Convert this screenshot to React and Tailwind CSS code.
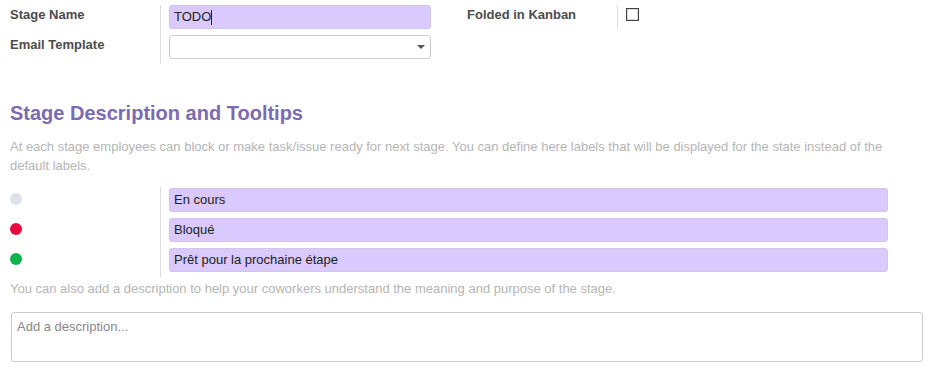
export default function App() {
  const font = { fontFamily: '"Liberation Sans", Arial, sans-serif' };
  return (
    <div className="w-[930px] h-[369px] bg-white overflow-hidden text-[13px] text-[#4c4c4c]" style={font}>
      {/* top groups */}
      <div className="flex pl-[10px] pt-[5px]">
        <div className="flex w-[457px]">
          <div className="w-[150px] flex flex-col gap-[10px] font-bold text-[#4c4c4c]">
            <div className="h-[20px] leading-[20px]">Stage Name</div>
            <div className="h-[20px] leading-[20px]">Email Template</div>
          </div>
          <div className="border-l border-[#dcdcdc] pl-[8px] pb-[5px] flex flex-col gap-[6px]">
            <div className="w-[262px] h-[24px] rounded-[3px] bg-[#d9c9fd] border border-[#cfc6e8] flex items-center px-[4px] text-[#222]">
              TODO<span className="inline-block w-px h-[15px] bg-[#222]" />
            </div>
            <div className="w-[262px] h-[24px] rounded-[3px] bg-white border border-[#cccccc] flex items-center justify-end pr-[5px]">
              <span className="w-0 h-0 border-l-[4px] border-r-[4px] border-t-[4px] border-l-transparent border-r-transparent border-t-[#555]" />
            </div>
          </div>
        </div>
        <div className="flex">
          <div className="w-[150px] font-bold h-[20px] leading-[20px]">Folded in Kanban</div>
          <div className="border-l border-[#dcdcdc] pl-[8px] h-[24px] pt-[3px]">
            <div className="w-[13px] h-[13px] border-[1.5px] border-[#444] bg-white shadow-[inset_0_0_0_1px_#d8d8e0]" />
          </div>
        </div>
      </div>

      {/* section title */}
      <div className="pl-[10px] pt-[37px] text-[20px] leading-[24px] font-bold text-[#7c6bb0]">
        Stage Description and Tooltips
      </div>
      <div className="pl-[10px] pr-[20px] pt-[12px] text-[13px] leading-[19px] text-[#b5b5b5]">
        At each stage employees can block or make task/issue ready for next stage. You can define here labels that will be displayed for the state instead of the default labels.
      </div>

      {/* states */}
      <div className="flex pl-[10px] pt-[12px]">
        <div className="w-[150px] flex flex-col gap-[18px] pt-[6px]">
          <span className="w-[12px] h-[12px] rounded-full bg-[#dee2e6]" />
          <span className="w-[12px] h-[12px] rounded-full bg-[#ea0842]" />
          <span className="w-[12px] h-[12px] rounded-full bg-[#0cb34a]" />
        </div>
        <div className="border-l border-[#dcdcdc] pl-[8px] pt-[1px] pb-[5px] flex flex-col gap-[6px]">
          {["En cours", "Bloqué", "Prêt pour la prochaine étape"].map((t) => (
            <div key={t} className="w-[719px] h-[24px] rounded-[3px] bg-[#d9c9fd] border border-[#cfc6e8] flex items-center px-[4px] text-[#222]">
              {t}
            </div>
          ))}
        </div>
      </div>
      <div className="pl-[10px] pt-[2px] text-[13px] leading-[19px] text-[#b5b5b5]">
        You can also add a description to help your coworkers understand the meaning and purpose of the stage.
      </div>
      <div className="pl-[11px] pt-[14px]">
        <div className="w-[912px] h-[50px] rounded-[3px] border border-[#cccccc] px-[5px] pt-[4px] text-[13px] text-[#888]">
          Add a description...
        </div>
      </div>
    </div>
  );
}
